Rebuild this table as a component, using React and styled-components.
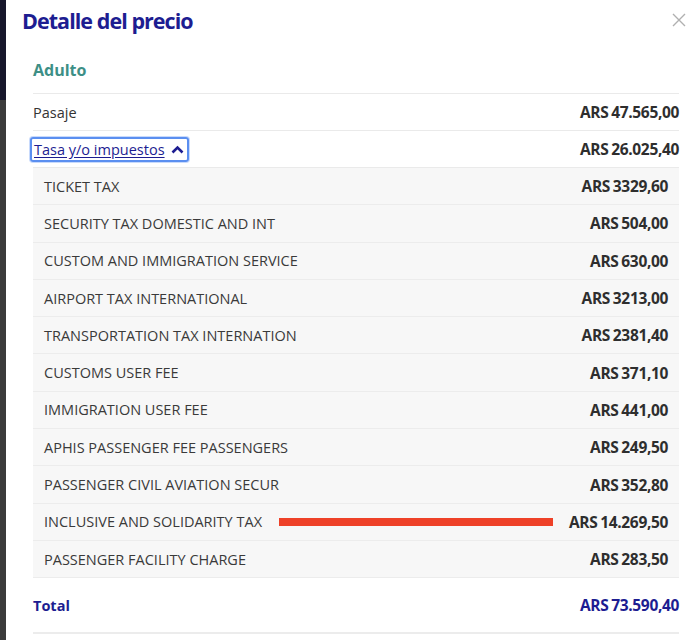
import React from "react";
import styled, { createGlobalStyle } from "styled-components";

const GlobalStyle = createGlobalStyle`
  html, body {
    margin: 0;
    padding: 0;
    height: 100%;
    overflow: hidden;
  }
  body {
    font-family: "Open Sans", "Noto Sans", sans-serif;
    background: #3a3a3a;
  }
`;

const Page = styled.div`
  display: flex;
  height: 640px;
`;

const Backdrop = styled.div`
  width: 6px;
  flex-shrink: 0;
  background: linear-gradient(to bottom, #17172b 0, #17172b 100px, #3b3b3b 100px);
`;

const Modal = styled.div`
  flex: 1;
  background: #fff;
  display: flex;
  flex-direction: column;
`;

const Header = styled.div`
  display: flex;
  align-items: center;
  justify-content: space-between;
  padding: 5px 14px 0 16px;
  height: 30px;
`;

const Title = styled.h1`
  margin: 0;
  font-size: 21.5px;
  font-weight: 700;
  color: #1d1d91;
  letter-spacing: -0.95px;
`;

const Close = styled.button`
  border: 0;
  background: none;
  padding: 0;
  display: flex;
  cursor: pointer;
`;

const Body = styled.div`
  padding: 0 21px 0 27px;
`;

const Passenger = styled.h2`
  margin: 0;
  padding: 24px 0 12px;
  font-size: 16px;
  font-weight: 700;
  color: #3d8f86;
  border-bottom: 1px solid #eaeaea;
`;

const Row = styled.div`
  display: flex;
  align-items: center;
  justify-content: space-between;
  height: ${(p) => (p.$sub ? "37.3px" : "37px")};
  box-sizing: border-box;
  padding: ${(p) => (p.$sub ? "0 11px" : "0")};
  background: ${(p) => (p.$sub ? "#f7f7f7" : "transparent")};
  border-bottom: 1px solid ${(p) => (p.$sub ? "#ececec" : "#eaeaea")};
  font-size: 14.5px;
  color: #333;
`;

const Label = styled.span`
  color: ${(p) => (p.$sub ? "#3a3a3a" : "#333")};
  text-transform: ${(p) => (p.$sub ? "uppercase" : "none")};
`;

const Amount = styled.span`
  margin-left: auto;
  font-size: 15.5px;
  font-weight: 700;
  color: ${(p) => (p.$total ? "#1d1d91" : "#2e2e2e")};
  letter-spacing: -0.35px;
  word-spacing: -0.8px;
`;

const Toggle = styled.a`
  display: inline-flex;
  align-items: center;
  gap: 6px;
  margin-left: -3px;
  padding: 1px 3px 1px 2px;
  color: #1d1d91;
  text-decoration: underline;
  text-underline-offset: 2px;
  border: 2px solid #5b8ff0;
  border-radius: 3px;
  box-shadow: 0 0 0 1px #c8dafc;
  cursor: pointer;
`;

const Redaction = styled.span`
  width: 274px;
  height: 8px;
  margin-left: 17px;
  background: #ee4128;
`;

const SubList = styled.div`
  display: flex;
  flex-direction: column;
`;

const TotalRow = styled(Row)`
  height: 56px;
  border-bottom: 2px solid #ececec;
  font-weight: 700;
`;

const TotalLabel = styled.span`
  color: #1d1d91;
  font-weight: 700;
`;

const taxes = [
  ["TICKET TAX", "ARS 3329,60"],
  ["SECURITY TAX DOMESTIC AND INT", "ARS 504,00"],
  ["CUSTOM AND IMMIGRATION SERVICE", "ARS 630,00"],
  ["AIRPORT TAX INTERNATIONAL", "ARS 3213,00"],
  ["TRANSPORTATION TAX INTERNATION", "ARS 2381,40"],
  ["CUSTOMS USER FEE", "ARS 371,10"],
  ["IMMIGRATION USER FEE", "ARS 441,00"],
  ["APHIS PASSENGER FEE PASSENGERS", "ARS 249,50"],
  ["PASSENGER CIVIL AVIATION SECUR", "ARS 352,80"],
  ["INCLUSIVE AND SOLIDARITY TAX", "ARS 14.269,50", true],
  ["PASSENGER FACILITY CHARGE", "ARS 283,50"],
];

const ChevronUp = () => (
  <svg width="13" height="9" viewBox="0 0 13 9">
    <path d="M1.5 7.5 L6.5 2.5 L11.5 7.5" fill="none" stroke="#1d1d91" strokeWidth="2.6" />
  </svg>
);

const CloseIcon = () => (
  <svg width="14" height="14" viewBox="0 0 14 14">
    <path d="M1 1 L13 13 M13 1 L1 13" stroke="#b0b0b0" strokeWidth="1.4" />
  </svg>
);

export default function App() {
  return (
    <>
      <GlobalStyle />
      <Page>
        <Backdrop />
        <Modal>
          <Header>
            <Title>Detalle del precio</Title>
            <Close aria-label="Cerrar">
              <CloseIcon />
            </Close>
          </Header>
          <Body>
            <Passenger>Adulto</Passenger>
            <Row>
              <Label>Pasaje</Label>
              <Amount>ARS 47.565,00</Amount>
            </Row>
            <Row>
              <Toggle>
                Tasa y/o impuestos <ChevronUp />
              </Toggle>
              <Amount>ARS 26.025,40</Amount>
            </Row>
            <SubList>
              {taxes.map(([name, value, hidden]) => (
                <Row $sub key={name}>
                  <Label $sub>{name}</Label>
                  {hidden && <Redaction />}
                  <Amount>{value}</Amount>
                </Row>
              ))}
            </SubList>
            <TotalRow>
              <TotalLabel>Total</TotalLabel>
              <Amount $total>ARS 73.590,40</Amount>
            </TotalRow>
          </Body>
        </Modal>
      </Page>
    </>
  );
}
